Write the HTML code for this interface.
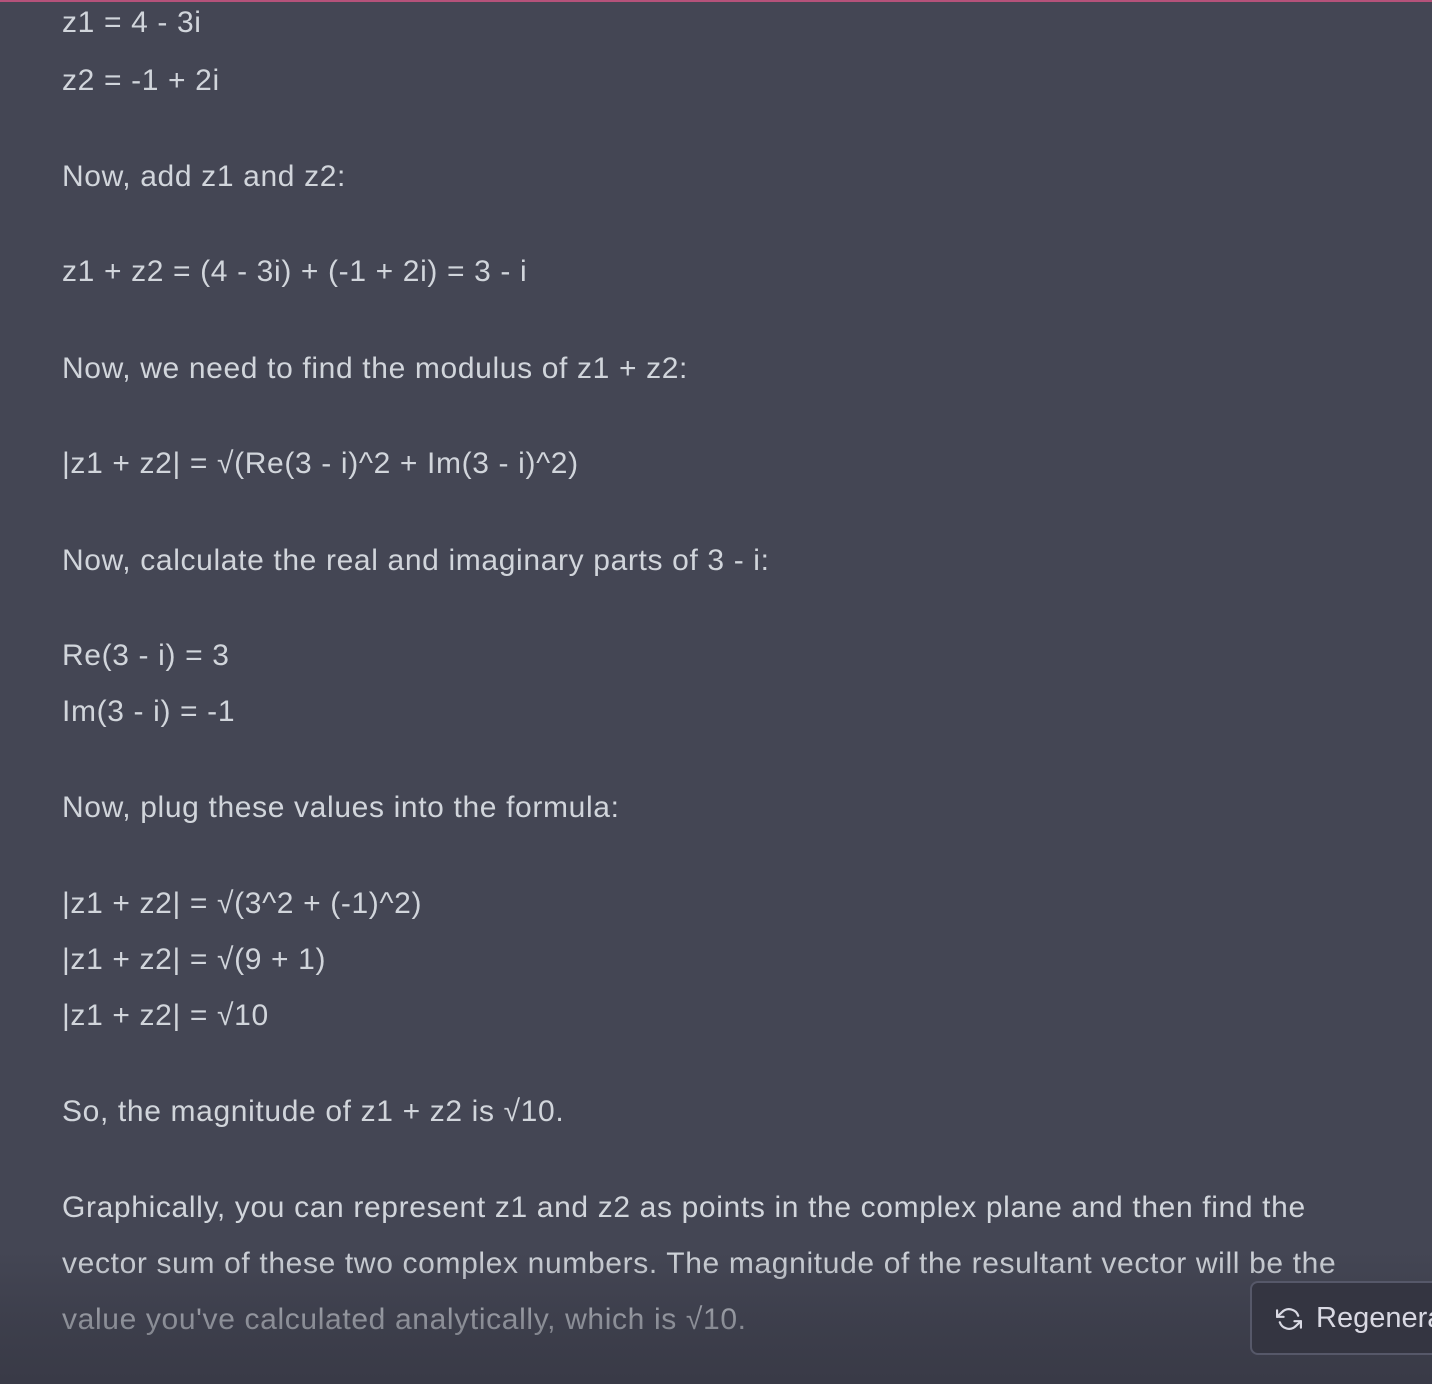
<!DOCTYPE html>
<html><head><meta charset="utf-8"><style>
html,body{margin:0;padding:0;width:1432px;height:1384px;overflow:hidden;background:#444654;}
body{position:relative;font-family:"Liberation Sans",sans-serif;color:#d1d5db;font-size:30px;}
.topbar{position:absolute;left:0;top:0;width:1432px;height:2px;background:#b5527a;}
.l{position:absolute;left:62px;height:56px;line-height:56px;white-space:nowrap;letter-spacing:0.64px;margin-top:1px;}
.fade{position:absolute;left:0;top:1250px;width:1432px;height:134px;background:linear-gradient(rgba(52,53,65,0),rgba(52,53,65,0.45) 55%,rgba(52,53,65,0.7));}
.btn{position:absolute;left:1250px;top:1281px;width:200px;height:74px;box-sizing:border-box;border:2px solid #565869;border-radius:8px;background:#343541;color:#d9d9e3;font-size:29px;line-height:70px;padding-left:64px;white-space:nowrap;}
.btn svg{position:absolute;left:24px;top:23px;}
</style></head><body>
<div class="topbar"></div>
<div class="l" style="top:-6px">z1 = 4 - 3i</div>
<div class="l" style="top:52px">z2 = -1 + 2i</div>
<div class="l" style="top:148px">Now, add z1 and z2:</div>
<div class="l" style="top:243px">z1 + z2 = (4 - 3i) + (-1 + 2i) = 3 - i</div>
<div class="l" style="top:340px">Now, we need to find the modulus of z1 + z2:</div>
<div class="l" style="top:435px">|z1 + z2| = √(Re(3 - i)^2 + Im(3 - i)^2)</div>
<div class="l" style="top:532px">Now, calculate the real and imaginary parts of 3 - i:</div>
<div class="l" style="top:627px">Re(3 - i) = 3</div>
<div class="l" style="top:683px">Im(3 - i) = -1</div>
<div class="l" style="top:779px">Now, plug these values into the formula:</div>
<div class="l" style="top:875px">|z1 + z2| = √(3^2 + (-1)^2)</div>
<div class="l" style="top:931px">|z1 + z2| = √(9 + 1)</div>
<div class="l" style="top:987px">|z1 + z2| = √10</div>
<div class="l" style="top:1083px">So, the magnitude of z1 + z2 is √10.</div>
<div class="l" style="top:1179px">Graphically, you can represent z1 and z2 as points in the complex plane and then find the</div>
<div class="l" style="top:1235px">vector sum of these two complex numbers. The magnitude of the resultant vector will be the</div>
<div class="l" style="top:1291px">value you've calculated analytically, which is √10.</div>
<div class="fade"></div>
<div class="btn"><svg width="26" height="26" viewBox="0 0 24 24" fill="none" stroke="#d9d9e3" stroke-width="2" stroke-linecap="round" stroke-linejoin="round"><polyline points="1 4 1 10 7 10"/><polyline points="23 20 23 14 17 14"/><path d="M20.5 9A9 9 0 0 0 5.6 5.6L1 10m22 4-4.6 4.4A9 9 0 0 1 3.5 15"/></svg>Regenerate</div>
</body></html>
